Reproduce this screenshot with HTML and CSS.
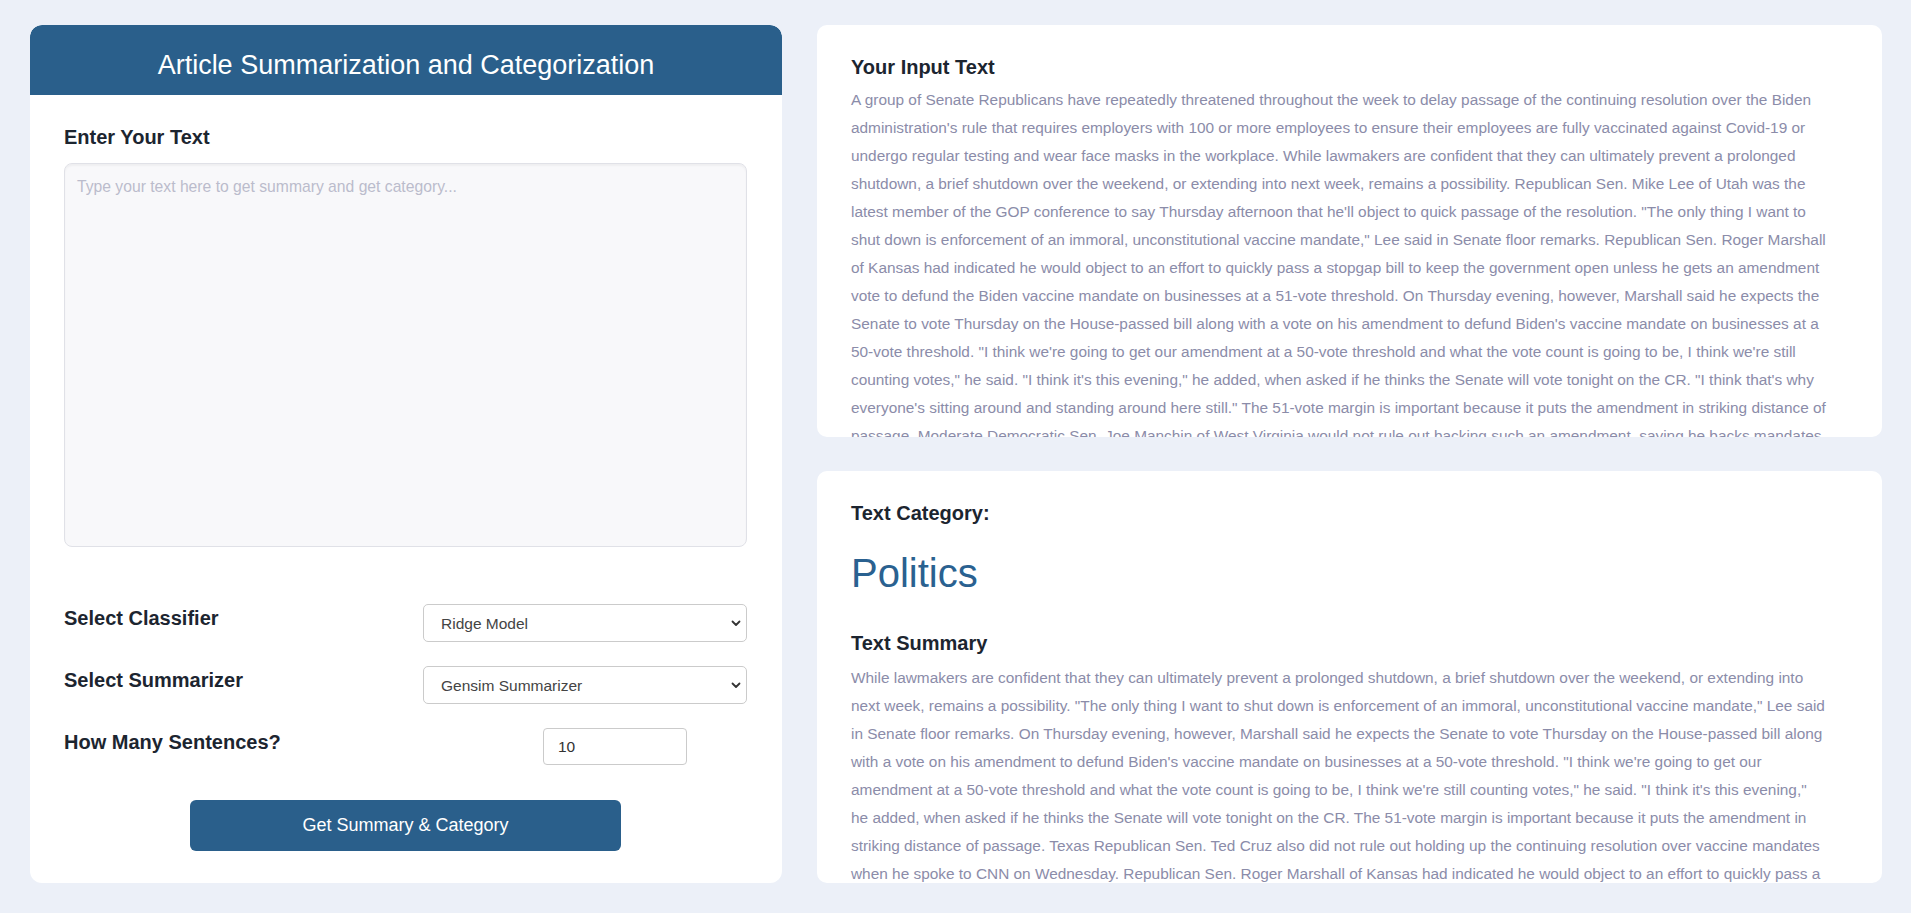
FILE: index.html
```html
<!DOCTYPE html>
<html lang="en">
<head>
<meta charset="utf-8">
<title>Article Summarization and Categorization</title>
<link rel="stylesheet" href="styles.css">
</head>
<body>
<main class="page">
  <section class="card form-card">
    <header class="card-head">
      <h1 class="title">Article Summarization and Categorization</h1>
    </header>
    <div class="form-body">
      <h3 class="heading">Enter Your Text</h3>
      <textarea class="text-input" placeholder="Type your text here to get summary and get category..."></textarea>
      <div class="form-row first-row">
        <label class="label">Select Classifier</label>
        <div class="select-wrap">
          <select class="select">
            <option>Ridge Model</option>
          </select>
          <svg class="chevron" width="10" height="7" viewBox="0 0 10 7"><path d="M1.5 1.5 L5 5 L8.5 1.5" fill="none" stroke="#333" stroke-width="1.8" stroke-linecap="round" stroke-linejoin="round"/></svg>
        </div>
      </div>
      <div class="form-row">
        <label class="label">Select Summarizer</label>
        <div class="select-wrap">
          <select class="select">
            <option>Gensim Summarizer</option>
          </select>
          <svg class="chevron" width="10" height="7" viewBox="0 0 10 7"><path d="M1.5 1.5 L5 5 L8.5 1.5" fill="none" stroke="#333" stroke-width="1.8" stroke-linecap="round" stroke-linejoin="round"/></svg>
        </div>
      </div>
      <div class="form-row">
        <label class="label">How Many Sentences?</label>
        <div class="num-wrap">
          <input class="num-input" type="number" value="10">
        </div>
      </div>
      <div class="btn-row">
        <button class="btn">Get Summary &amp; Category</button>
      </div>
    </div>
  </section>

  <div class="right-col">
    <section class="card info-card">
      <h3 class="heading">Your Input Text</h3>
      <p class="body-text">A group of Senate Republicans have repeatedly threatened throughout the week to delay passage of the continuing resolution over the Biden<br>
administration's rule that requires employers with 100 or more employees to ensure their employees are fully vaccinated against Covid-19 or<br>
undergo regular testing and wear face masks in the workplace. While lawmakers are confident that they can ultimately prevent a prolonged<br>
shutdown, a brief shutdown over the weekend, or extending into next week, remains a possibility. Republican Sen. Mike Lee of Utah was the<br>
latest member of the GOP conference to say Thursday afternoon that he'll object to quick passage of the resolution. "The only thing I want to<br>
shut down is enforcement of an immoral, unconstitutional vaccine mandate," Lee said in Senate floor remarks. Republican Sen. Roger Marshall<br>
of Kansas had indicated he would object to an effort to quickly pass a stopgap bill to keep the government open unless he gets an amendment<br>
vote to defund the Biden vaccine mandate on businesses at a 51-vote threshold. On Thursday evening, however, Marshall said he expects the<br>
Senate to vote Thursday on the House-passed bill along with a vote on his amendment to defund Biden's vaccine mandate on businesses at a<br>
50-vote threshold. "I think we're going to get our amendment at a 50-vote threshold and what the vote count is going to be, I think we're still<br>
counting votes," he said. "I think it's this evening," he added, when asked if he thinks the Senate will vote tonight on the CR. "I think that's why<br>
everyone's sitting around and standing around here still." The 51-vote margin is important because it puts the amendment in striking distance of<br>
passage. Moderate Democratic Sen. Joe Manchin of West Virginia would not rule out backing such an amendment, saying he backs mandates<br>
for federal workers but not for private businesses. Texas Republican Sen. Ted Cruz also did not rule out holding up the continuing resolution<br>
over vaccine mandates when he spoke to CNN on Wednesday.</p>
    </section>
    <section class="card info-card">
      <h3 class="heading">Text Category:</h3>
      <div class="category">Politics</div>
      <h3 class="heading">Text Summary</h3>
      <p class="body-text">While lawmakers are confident that they can ultimately prevent a prolonged shutdown, a brief shutdown over the weekend, or extending into<br>
next week, remains a possibility. "The only thing I want to shut down is enforcement of an immoral, unconstitutional vaccine mandate," Lee said<br>
in Senate floor remarks. On Thursday evening, however, Marshall said he expects the Senate to vote Thursday on the House-passed bill along<br>
with a vote on his amendment to defund Biden's vaccine mandate on businesses at a 50-vote threshold. "I think we're going to get our<br>
amendment at a 50-vote threshold and what the vote count is going to be, I think we're still counting votes," he said. "I think it's this evening,"<br>
he added, when asked if he thinks the Senate will vote tonight on the CR. The 51-vote margin is important because it puts the amendment in<br>
striking distance of passage. Texas Republican Sen. Ted Cruz also did not rule out holding up the continuing resolution over vaccine mandates<br>
when he spoke to CNN on Wednesday. Republican Sen. Roger Marshall of Kansas had indicated he would object to an effort to quickly pass a<br>
stopgap bill to keep the government open unless he gets an amendment vote to defund the Biden vaccine mandate on businesses at a<br>
51-vote threshold.</p>
    </section>
  </div>
</main>
</body>
</html>
```

FILE: styles.css
```css
* {
  box-sizing: border-box;
}

html, body {
  margin: 0;
  padding: 0;
}

body {
  background: #ecf0f8;
  font-family: "Liberation Sans", Arial, Helvetica, sans-serif;
  color: #1c2530;
  height: 913px;
  overflow: hidden;
}

.page {
  display: grid;
  grid-template-columns: 752px 1065px;
  column-gap: 35px;
  padding: 25px 29px 30px 30px;
  height: 913px;
}

.card {
  background: #ffffff;
  border-radius: 12px;
}

.form-card {
  display: flex;
  flex-direction: column;
  overflow: hidden;
}

.card-head {
  background: #2a5f8b;
  height: 70px;
  padding-top: 24px;
  border-radius: 12px 12px 0 0;
}

.title {
  margin: 0;
  text-align: center;
  color: #ffffff;
  font-size: 27px;
  font-weight: normal;
  line-height: 32px;
}

.form-body {
  padding: 30px 35px 0 34px;
}

.heading {
  margin: 0;
  font-size: 20px;
  font-weight: bold;
  line-height: 24px;
  color: #1c2530;
}

.form-body .heading {
  margin-bottom: 14px;
}

.text-input {
  display: block;
  width: 100%;
  height: 384px;
  resize: none;
  background: #f8f8fa;
  border: 1px solid #e0e1e7;
  border-radius: 8px;
  box-shadow: inset 0 2px 2px rgba(0, 0, 0, 0.04);
  padding: 14px 12px;
  font-family: "Liberation Sans", Arial, sans-serif;
  font-size: 15.7px;
  color: #444;
  outline: none;
}

.text-input::placeholder {
  color: #bbbccc;
}

.form-row {
  display: grid;
  grid-template-columns: 1fr 324px;
  align-items: start;
  margin-top: 24px;
}

.form-row.first-row {
  margin-top: 57px;
}

.label {
  font-size: 20px;
  font-weight: bold;
  line-height: 24px;
  padding-top: 2px;
  color: #1c2530;
}

.select-wrap {
  position: relative;
}

.select {
  display: block;
  width: 100%;
  height: 38px;
  -webkit-appearance: none;
  appearance: none;
  background: #ffffff;
  border: 1px solid #cbcbcb;
  border-radius: 5px;
  padding: 0 40px 0 17px;
  font-family: "Liberation Sans", Arial, sans-serif;
  font-size: 15.5px;
  color: #444;
  outline: none;
}

.chevron {
  position: absolute;
  right: 6px;
  top: 16px;
  pointer-events: none;
}

.num-wrap {
  padding-left: 120px;
}

.num-input {
  display: block;
  width: 144px;
  height: 37px;
  border: 1px solid #cbcbcb;
  border-radius: 4px;
  padding: 0 14px;
  font-family: "Liberation Sans", Arial, sans-serif;
  font-size: 15.5px;
  color: #333;
  background: #fff;
  outline: none;
  -moz-appearance: textfield;
}

.num-input::-webkit-outer-spin-button,
.num-input::-webkit-inner-spin-button {
  -webkit-appearance: none;
  margin: 0;
}

.btn-row {
  display: flex;
  justify-content: center;
  margin-top: 35px;
}

.btn {
  width: 431px;
  height: 51px;
  background: #2a5f8b;
  color: #ffffff;
  border: none;
  border-radius: 6px;
  font-family: "Liberation Sans", Arial, sans-serif;
  font-size: 18px;
  cursor: pointer;
}

.right-col {
  display: flex;
  flex-direction: column;
  gap: 34px;
  min-height: 0;
}

.info-card {
  flex: 1 1 0;
  min-height: 0;
  overflow: hidden;
  border-radius: 10px;
  padding: 30px 30px 30px 34px;
}

.info-card > .heading:first-child {
  margin-bottom: 7px;
}

.body-text {
  margin: 0;
  font-size: 15.4px;
  line-height: 28px;
  color: #8b8ca9;
  white-space: nowrap;
}

.category {
  font-size: 40px;
  line-height: 48px;
  color: #2a6190;
  margin: 24px 0 34px;
}

.category + .heading {
  margin-bottom: 9px;
}
```
